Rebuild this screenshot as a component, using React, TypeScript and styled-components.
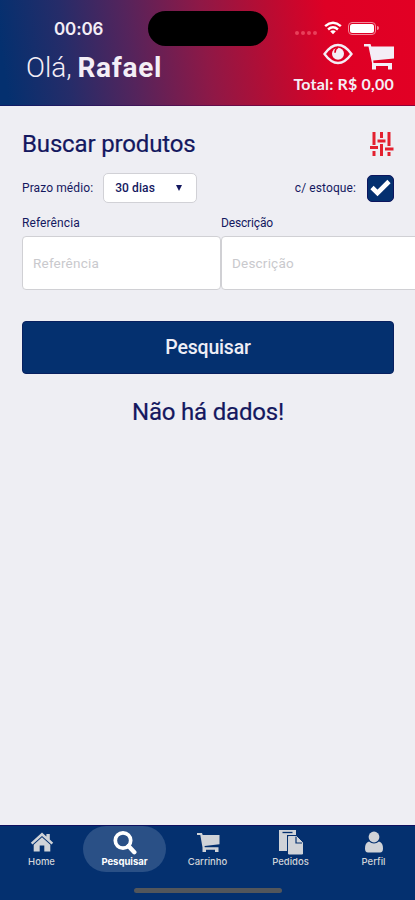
import React from "react";
import styled, { createGlobalStyle } from "styled-components";

const navy = "#04306f";
const ink = "#14185f";

const GlobalStyle = createGlobalStyle`
  * { box-sizing: border-box; }
  html, body { margin: 0; padding: 0; overflow: hidden; background: #eeeef3; }
  button, input { font: inherit; margin: 0; }
  svg { display: block; flex: none; }
`;

const Screen = styled.div`
  width: 415px;
  height: 900px;
  display: flex;
  flex-direction: column;
  overflow: hidden;
  background: #eeeef3;
  color: ${ink};
  font-family: Roboto, "Liberation Sans", sans-serif;
`;

const Header = styled.header`
  height: 106px;
  flex: none;
  border-bottom: 1px solid rgba(20, 0, 90, 0.4);
  background: linear-gradient(82deg, #04306f 2%, #262c69 17%, #54245c 32%, #8f1846 50%, #b80c33 65%, #de0025 79%, #e20024 100%);
  color: #f4eef6;
`;

const StatusBar = styled.div`
  height: 47px;
  display: grid;
  grid-template-columns: 148px 120px 1fr;
  padding-top: 11px;
`;

const Clock = styled.div`
  padding-left: 54px;
  font: 600 17px/36px Inter, sans-serif;
  letter-spacing: -0.15px;
`;

const Island = styled.div`
  height: 35px;
  border-radius: 18px;
  background: #000;
`;

const Signals = styled.div`
  display: flex;
  align-items: center;
  height: 34px;
  padding-left: 26px;
`;

const Dots = styled.div`
  display: flex;
  gap: 2px;
  margin: 9px 7px 0 1px;
`;

const Dot = styled.i`
  width: 4px;
  height: 4px;
  border-radius: 50%;
  background: #e8405a;
`;

const Battery = styled.div`
  width: 28px;
  height: 13px;
  margin-left: 6px;
  padding: 1px;
  border: 1px solid #f28a9b;
  border-radius: 4px;
`;

const Charge = styled.div`
  height: 9px;
  border-radius: 2.5px;
  background: #fff;
`;

const BatteryTip = styled.div`
  width: 2px;
  height: 4px;
  margin-left: 1px;
  border-radius: 0 2px 2px 0;
  background: #f28a9b;
`;

const Greeting = styled.div`
  display: flex;
  justify-content: space-between;
  padding: 0 21px 0 26px;
`;

const Hello = styled.h1`
  margin: 4px 0 0;
  font-size: 28px;
  line-height: 34px;
  font-weight: 300;
  letter-spacing: 0;
  white-space: pre;
  b { font-weight: 700; margin-left: -1px; letter-spacing: 0.7px; }
`;

const Account = styled.div`
  display: flex;
  flex-direction: column;
  align-items: flex-end;
  margin-top: -4px;
`;

const AccountIcons = styled.div`
  display: flex;
  gap: 11px;
  height: 29px;
`;

const Total = styled.div`
  font: 700 16px/23px Lato, sans-serif;
  letter-spacing: 0.2px;
`;

const Main = styled.main`
  flex: 1;
  padding: 21px 21px 0 22px;
`;

const TitleRow = styled.div`
  display: flex;
  align-items: center;
  justify-content: space-between;
  height: 34px;
`;

const Title = styled.h2`
  margin: 0;
  font-size: 24px;
  line-height: 34px;
  font-weight: 400;
  letter-spacing: -0.15px;
  -webkit-text-stroke: 0.2px ${ink};
`;

const FilterRow = styled.div`
  display: flex;
  align-items: center;
  height: 30px;
  margin-top: 12px;
`;

const Label = styled.span<{ $spacing?: number }>`
  font-size: 12px;
  line-height: 18px;
  letter-spacing: ${(p) => p.$spacing ?? 0}px;
  white-space: nowrap;
`;

const Select = styled.button`
  display: flex;
  align-items: center;
  justify-content: space-between;
  width: 94px;
  height: 30px;
  margin-left: 10px;
  padding: 0 14px 0 11px;
  border: 1px solid #d1d1d6;
  border-radius: 5px;
  background: #fff;
  color: ${ink};
  font-size: 12px;
  font-weight: 500;
  letter-spacing: 0.1px;
`;

const Stock = styled.label`
  display: flex;
  align-items: center;
  gap: 11px;
  margin-left: auto;
`;

const Check = styled.span`
  display: grid;
  place-items: center;
  width: 27px;
  height: 27px;
  border-radius: 5px;
  background: ${navy};
  border: 1px solid #0d155d;
`;

const Fields = styled.div`
  display: grid;
  grid-template-columns: 199px 199px;
  margin-top: 11px;
`;

const Field = styled.label`
  display: flex;
  flex-direction: column;
  gap: 4px;
`;

const Input = styled.input`
  width: 199px;
  height: 54px;
  padding: 0 10px 1px;
  border: 1px solid #d0d0d4;
  border-radius: 4px;
  background: #fff;
  font-size: 13.5px;
  letter-spacing: 0.2px;
  &::placeholder { color: #c9c9cd; opacity: 1; }
`;

const SearchButton = styled.button`
  display: block;
  width: 372px;
  height: 53px;
  margin-top: 31px;
  border: 1px solid #08205f;
  border-radius: 4px;
  background: ${navy};
  color: #eeeef6;
  font-size: 19.5px;
  font-weight: 500;
  letter-spacing: -0.2px;
  padding: 0 0 1px;
`;

const Empty = styled.p`
  margin: 20px 0 0;
  text-align: center;
  font-size: 24px;
  line-height: 36px;
  letter-spacing: -0.2px;
  -webkit-text-stroke: 0.2px ${ink};
`;

const Footer = styled.footer`
  height: 75px;
  flex: none;
  border-top: 1px solid #10105f;
  background: ${navy};
`;

const Tabs = styled.nav`
  display: grid;
  grid-template-columns: repeat(5, 83px);
  height: 46px;
`;

const Tab = styled.a<{ $active?: boolean }>`
  display: flex;
  flex-direction: column;
  align-items: center;
  padding-top: 4px;
  border-radius: 24px;
  color: ${(p) => (p.$active ? "#fff" : "#d0d3d8")};
  background: ${(p) => (p.$active ? "#2a5086" : "transparent")};
  font: ${(p) => (p.$active ? 700 : 500)} 9.5px/12px Inter, sans-serif;
  svg { height: 26px; }
`;

const HomeBar = styled.div`
  width: 148px;
  height: 5px;
  margin: 16px auto 0;
  border-radius: 3px;
  background: #53565b;
`;

const Cart = ({ size }: { size: number }) => (
  <svg width={size} height={size} viewBox="0 0 30 30" fill="currentColor">
    <path d="M0 1h6.500l.8 2.500H30V15.500L9.200 17.500l.3 2.500H28v6.500h-4V23H12v3.500H8V20L4.500 3.500H0z" />
  </svg>
);

const tabs = [
  {
    label: "Home",
    icon: (
      <svg width="24" height="26" viewBox="0 0 24 26" fill="currentColor">
        <path d="M12 2.500.8 12.700l1.700 1.900L12 6l9.500 8.600 1.700-1.900-3.400-3.100V4h-3.400v2.500z" />
        <path d="m12 7.200-8.300 7.500v6.800h6v-6h4.600v6h6v-6.800z" />
      </svg>
    ),
  },
  {
    label: "Pesquisar",
    icon: (
      <svg width="24" height="26" viewBox="0 0 24 26" fill="none" stroke="currentColor">
        <circle cx="10" cy="10.500" r="7.700" strokeWidth="3.700" />
        <path d="m15.500 16 5.800 6.200" strokeWidth="4.400" strokeLinecap="round" />
      </svg>
    ),
  },
  {
    label: "Carrinho",
    icon: (
      <svg width="24" height="26" viewBox="0 0 24 26" fill="currentColor">
        <path d="M1 3h5l.7 2H23.500v9.300L8.500 16l.3 1.300H22.500V22H19v-2.200H10V22H6.500v-4.500L4.300 5H1z" />
      </svg>
    ),
  },
  {
    label: "Pedidos",
    icon: (
      <svg width="26" height="26" viewBox="0 0 26 26">
        <path fill="currentColor" d="M1 0h17v6h-8v15H1z" />
        <path stroke="#04306f" strokeWidth="1.300" d="M4.500 2.500h10" />
        <path fill="#04306f" d="M9 5h10l6.500 7v13H9z" />
        <path fill="currentColor" stroke="currentColor" d="M10.500 6.500h7V13h7v11h-14zM18.500 6.500l6 6h-6z" />
        <path fill="none" stroke="#04306f" strokeWidth="1.200" d="M18 7v6h6" />
      </svg>
    ),
  },
  {
    label: "Perfil",
    icon: (
      <svg width="20" height="26" viewBox="0 0 20 26" fill="currentColor">
        <circle cx="10" cy="7" r="5.400" />
        <path d="M5 11.500c3 2.500 7 2.500 10 0 3 1 4 3.500 4 7 0 2.500-1 4-3 4H4c-2 0-3-1.500-3-4 0-3.500 1-6 4-7" />
      </svg>
    ),
  },
];

export default function App() {
  return (
    <Screen>
      <GlobalStyle />
      <Header>
        <StatusBar>
          <Clock>00:06</Clock>
          <Island />
          <Signals>
            <Dots><Dot /><Dot /><Dot /><Dot /></Dots>
            <svg width="18" height="14" viewBox="0 0 19 14" fill="none" stroke="#fff" strokeWidth="2.700">
              <path d="M1.200 5Q9.500-2 17.800 5M4.300 8.500q5.200-4.500 10.400 0" />
              <path d="m6.500 10.500 3 3 3-3q-3-2.500-6 0" fill="#fff" stroke="none" />
            </svg>
            <Battery><Charge /></Battery>
            <BatteryTip />
          </Signals>
        </StatusBar>
        <Greeting>
          <Hello>Olá, <b>Rafael</b></Hello>
          <Account>
            <AccountIcons>
              <svg width="30" height="22" viewBox="0 0 30 22">
                <path d="M1.500 11Q8 2 15 2t13.500 9Q22 20 15 20T1.500 11Z" fill="none" stroke="currentColor" strokeWidth="2.300" />
                <circle cx="15" cy="10.800" r="6" fill="currentColor" />
                <path d="M12 9.800q0-4 3-5.500" fill="none" stroke="#e20024" strokeWidth="1.600" />
              </svg>
              <Cart size={30} />
            </AccountIcons>
            <Total>Total: R$ 0,00</Total>
          </Account>
        </Greeting>
      </Header>
      <Main>
        <TitleRow>
          <Title>Buscar produtos</Title>
          <svg width="25" height="24" viewBox="0 0 25 24" fill="none" stroke="#e3202f" strokeWidth="3">
            <path d="M5 0v13M5 19v5M12.500 0v6M12.500 12v12M20 0v14M20 20v4" />
            <path d="M1 15.500h8M8.500 9h8M16 17h8.500" />
          </svg>
        </TitleRow>
        <FilterRow>
          <Label $spacing={0.1}>Prazo médio:</Label>
          <Select>
            30 dias
            <svg width="6" height="6" viewBox="0 0 6 6" fill={ink}><path d="M0 0h6L3 6z" /></svg>
          </Select>
          <Stock>
            <Label $spacing={0.1}>c/ estoque:</Label>
            <Check>
              <svg width="21" height="18" viewBox="0 0 21 18" fill="none" stroke="#fff" strokeWidth="4.600">
                <path d="m2 8.500 5.500 5.500L19 2.500" />
              </svg>
            </Check>
          </Stock>
        </FilterRow>
        <Fields>
          <Field><Label $spacing={0.1}>Referência</Label><Input placeholder="Referência" /></Field>
          <Field><Label $spacing={-0.15}>Descrição</Label><Input placeholder="Descrição" /></Field>
        </Fields>
        <SearchButton>Pesquisar</SearchButton>
        <Empty>Não há dados!</Empty>
      </Main>
      <Footer>
        <Tabs>
          {tabs.map((t) => (
            <Tab key={t.label} $active={t.label === "Pesquisar"}>
              {t.icon}
              {t.label}
            </Tab>
          ))}
        </Tabs>
        <HomeBar />
      </Footer>
    </Screen>
  );
}
